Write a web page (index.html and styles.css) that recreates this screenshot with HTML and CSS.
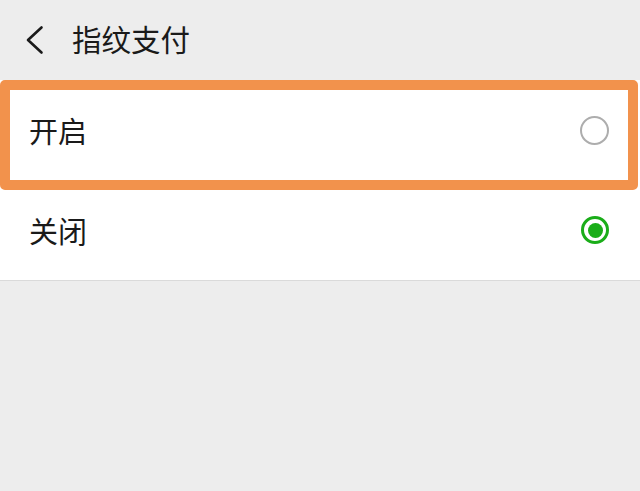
FILE: index.html
```html
<!DOCTYPE html>
<html lang="zh-CN">
<head>
<meta charset="utf-8">
<title>指纹支付</title>
<link rel="stylesheet" href="styles.css">
</head>
<body>
<div class="page">
  <header class="nav">
    <svg class="back" width="20" height="30" viewBox="0 0 20 30">
      <polyline points="16.5,2.5 3,15 16.5,27.5" fill="none" stroke="#1a1a1a" stroke-width="2.6" stroke-linecap="round" stroke-linejoin="round"/>
    </svg>
    <h1 class="title">指纹支付</h1>
  </header>
  <section class="list">
    <div class="row">
      <span class="label">开启</span>
      <span class="radio"></span>
    </div>
    <div class="row">
      <span class="label">关闭</span>
      <span class="radio radio-on"></span>
    </div>
    <div class="highlight"></div>
  </section>
</div>
</body>
</html>
```
FILE: styles.css
```css
html, body {
  margin: 0;
  padding: 0;
  background: #ededed;
}
body {
  font-family: "Noto Sans CJK SC", "Noto Sans", sans-serif;
  color: #1a1a1a;
  width: 640px;
  height: 491px;
  overflow: hidden;
}
.page {
  display: flex;
  flex-direction: column;
}
.nav {
  height: 80px;
  display: flex;
  align-items: center;
  padding-left: 25px;
  box-sizing: border-box;
}
.back {
  display: block;
  margin-right: 27px;
}
.title {
  margin: -5px 0 0 0;
  font-size: 29.5px;
  font-weight: 400;
  line-height: 40px;
  letter-spacing: 0;
}
.list {
  position: relative;
  background: #fff;
  border-bottom: 1px solid #dadada;
}
.row {
  height: 100px;
  display: flex;
  align-items: center;
  justify-content: space-between;
  padding: 0 31px 0 29px;
}
.label {
  font-size: 29px;
  line-height: 40px;
  margin-top: 0;
}
.radio {
  width: 25px;
  height: 25px;
  border: 2px solid #adadad;
  border-radius: 50%;
  box-sizing: content-box;
  display: flex;
  align-items: center;
  justify-content: center;
}
.radio-on {
  border: 3px solid #1aad19;
  width: 22px;
  height: 22px;
}
.radio-on::after {
  content: "";
  width: 15px;
  height: 15px;
  border-radius: 50%;
  background: #1aad19;
}
.highlight {
  position: absolute;
  left: 0;
  top: 0;
  width: 638px;
  height: 110px;
  border: 10px solid #f2924c;
  border-radius: 5px;
  box-sizing: border-box;
}
```
